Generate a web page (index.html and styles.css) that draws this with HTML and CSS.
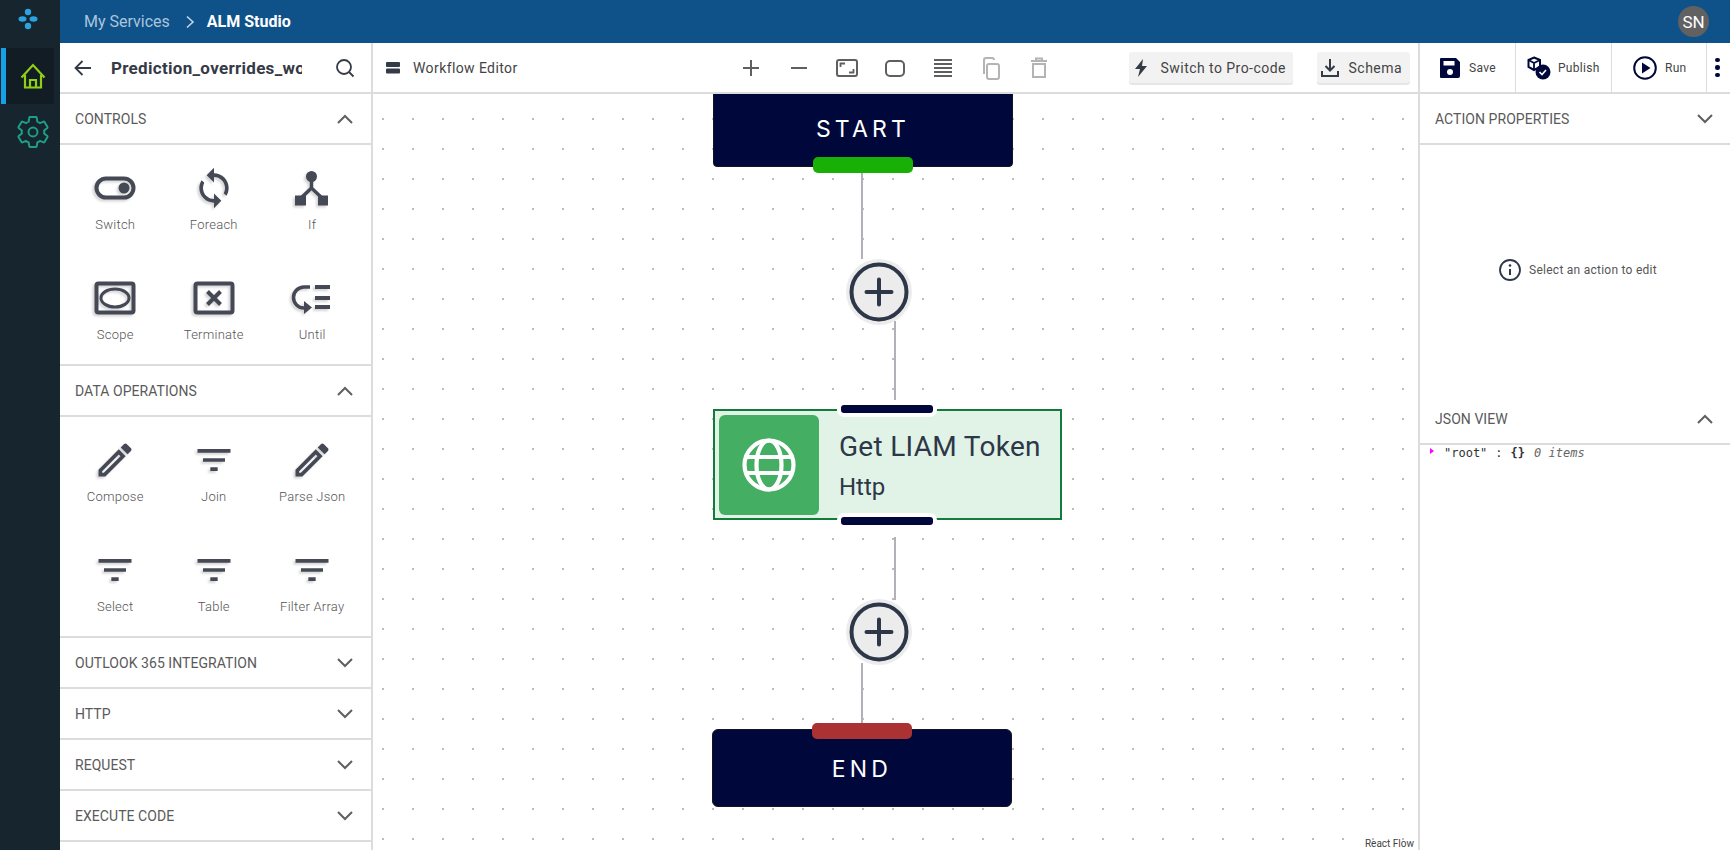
FILE: index.html
```html
<!DOCTYPE html>
<html lang="en">
<head>
  <meta charset="UTF-8">
  <title>ALM Studio</title>
  <link rel="stylesheet" href="styles.css">
</head>
<body>
  <div class="app">
    <nav class="rail">
      <svg class="rail-logo" width="30" height="30" viewBox="0 0 30 30"><circle cx="15" cy="8" r="3.2"/><circle cx="15" cy="22" r="3.2"/><ellipse cx="9.5" cy="15" rx="4" ry="2.8"/><ellipse cx="20.5" cy="15" rx="4" ry="2.8"/></svg>
      <a class="rail-item active">
        <svg width="28" height="28" viewBox="0 0 28 28" fill="none" stroke="#8fd014" stroke-width="2.2"><path d="M2.5 15.5 14 3l11.5 12.5"/><path d="M6 13v12.5h16V13"/><path d="M11 25.5V18h6v7.500"/></svg>
      </a>
      <a class="rail-item">
        <svg width="36" height="36" viewBox="0 0 24 24" fill="none" stroke="#1f9e8a" stroke-width="1.3"><path d="M19.43 12.98c.04-.32.07-.64.07-.98 0-.34-.03-.66-.07-.98l2.11-1.65c.19-.15.24-.42.12-.64l-2-3.46c-.09-.16-.26-.25-.44-.25-.06 0-.12.01-.17.03l-2.49 1c-.52-.4-1.08-.73-1.69-.98l-.38-2.65C14.46 2.18 14.25 2 14 2h-4c-.25 0-.46.18-.49.42l-.38 2.65c-.61.25-1.17.59-1.69.98l-2.49-1c-.06-.02-.12-.03-.18-.03-.17 0-.34.09-.43.25l-2 3.46c-.13.22-.07.49.12.64l2.11 1.65c-.04.32-.07.65-.07.98 0 .33.03.66.07.98l-2.11 1.65c-.19.15-.24.42-.12.64l2 3.46c.09.16.26.25.44.25.06 0 .12-.01.17-.03l2.49-1c.52.4 1.08.73 1.69.98l.38 2.65c.03.24.24.42.49.42h4c.25 0 .46-.18.49-.42l.38-2.65c.61-.25 1.17-.59 1.69-.98l2.49 1c.06.02.12.03.18.03.17 0 .34-.09.43-.25l2-3.46c.12-.22.07-.49-.12-.64l-2.11-1.65z"/><circle cx="12" cy="12" r="3"/></svg>
      </a>
    </nav>

    <div class="main">
      <header class="topbar">
        <span class="crumb">My Services</span>
        <svg class="crumb-sep" width="10" height="14" viewBox="0 0 10 14" fill="none" stroke="#c6d6e4" stroke-width="1.6"><path d="M2 1.500 8 7l-6 5.500"/></svg>
        <span class="crumb-current">ALM Studio</span>
        <span class="avatar">SN</span>
      </header>

      <div class="workspace">
        <aside class="tools">
          <div class="tools-head">
            <svg width="20" height="20" viewBox="0 0 20 20" fill="none" stroke="#353a47" stroke-width="1.800"><path d="M18 10H2.500M9.500 3l-7 7 7 7"/></svg>
            <span class="flow-name">Prediction_overrides_workflow</span>
            <svg width="20" height="20" viewBox="0 0 20 20" fill="none" stroke="#353a47" stroke-width="1.800"><circle cx="9" cy="9" r="7"/><path d="m14 14 4.500 4.500"/></svg>
          </div>

          <div class="section-head">
            <span>CONTROLS</span>
            <svg class="chev" width="16" height="10" viewBox="0 0 16 10"><path d="M1 9l7-7 7 7"/></svg>
          </div>
          <div class="palette">
            <div class="tool">
              <svg class="tool-icon" viewBox="0 0 44 44"><rect x="3.500" y="12.500" width="37" height="19" rx="9.500" fill="none" stroke="#454855" stroke-width="4"/><circle cx="31" cy="22" r="5.500"/></svg>
              <span>Switch</span>
            </div>
            <div class="tool">
              <svg class="tool-icon" viewBox="0 0 24 24"><path d="M12 4V1L8 5l4 4V6c3.310 0 6 2.690 6 6 0 1.010-.25 1.970-.7 2.800l1.460 1.460C19.540 15.030 20 13.570 20 12c0-4.420-3.580-8-8-8zm0 14c-3.310 0-6-2.690-6-6 0-1.010.25-1.970.7-2.800L5.240 7.740C4.460 8.970 4 10.430 4 12c0 4.420 3.580 8 8 8v3l4-4-4-4v3z"/></svg>
              <span>Foreach</span>
            </div>
            <div class="tool">
              <svg class="tool-icon" viewBox="0 0 44 44"><circle cx="21.500" cy="10.500" r="5.500"/><path d="M21.500 14v8L10 33M21.500 22 33 33" fill="none" stroke="#454855" stroke-width="3.500"/><rect x="5" y="29.500" width="11" height="10"/><rect x="28" y="29.500" width="10" height="10"/></svg>
              <span>If</span>
            </div>
            <div class="tool">
              <svg class="tool-icon" viewBox="0 0 44 44"><rect x="3.500" y="7.500" width="37" height="29" rx="2" fill="none" stroke="#454855" stroke-width="4"/><ellipse cx="22" cy="22" rx="14" ry="9" fill="none" stroke="#454855" stroke-width="3"/></svg>
              <span>Scope</span>
            </div>
            <div class="tool">
              <svg class="tool-icon" viewBox="0 0 44 44"><rect x="3.500" y="7.500" width="37" height="29" rx="2" fill="none" stroke="#454855" stroke-width="4"/><path d="m15.500 15.500 13 13m0-13-13 13" fill="none" stroke="#454855" stroke-width="4"/></svg>
              <span>Terminate</span>
            </div>
            <div class="tool">
              <svg class="tool-icon" viewBox="0 0 44 44"><path d="M20 11h-6a10.500 10.500 0 0 0 0 21h2" fill="none" stroke="#454855" stroke-width="3.500"/><path d="m14 25 8 6.500-8 6.500z"/><path d="M25 11h15M25 22h15M25 31h15" fill="none" stroke="#454855" stroke-width="4"/></svg>
              <span>Until</span>
            </div>
          </div>

          <div class="section-head">
            <span>DATA OPERATIONS</span>
            <svg class="chev" width="16" height="10" viewBox="0 0 16 10"><path d="M1 9l7-7 7 7"/></svg>
          </div>
          <div class="palette">
            <div class="tool">
              <svg class="tool-icon" viewBox="0 0 24 24"><path d="M14.060 9.020l.92.92L5.920 19H5v-.92l9.060-9.060M17.660 3c-.25 0-.51.1-.7.29l-1.830 1.830 3.750 3.750 1.830-1.830c.39-.39.39-1.020 0-1.410l-2.340-2.340c-.2-.2-.45-.29-.71-.29zm-3.600 3.190L3 17.250V21h3.750L17.810 9.940l-3.750-3.750z"/></svg>
              <span>Compose</span>
            </div>
            <div class="tool">
              <svg class="tool-icon" viewBox="0 0 24 24"><path d="M10 18h4v-2h-4v2zM3 6v2h18V6H3zm3 7h12v-2H6v2z"/></svg>
              <span>Join</span>
            </div>
            <div class="tool">
              <svg class="tool-icon" viewBox="0 0 24 24"><path d="M14.060 9.020l.92.92L5.920 19H5v-.92l9.060-9.060M17.660 3c-.25 0-.51.1-.7.29l-1.830 1.830 3.750 3.750 1.830-1.830c.39-.39.39-1.020 0-1.410l-2.340-2.340c-.2-.2-.45-.29-.71-.29zm-3.600 3.190L3 17.250V21h3.750L17.810 9.940l-3.750-3.750z"/></svg>
              <span>Parse Json</span>
            </div>
            <div class="tool">
              <svg class="tool-icon" viewBox="0 0 24 24"><path d="M10 18h4v-2h-4v2zM3 6v2h18V6H3zm3 7h12v-2H6v2z"/></svg>
              <span>Select</span>
            </div>
            <div class="tool">
              <svg class="tool-icon" viewBox="0 0 24 24"><path d="M10 18h4v-2h-4v2zM3 6v2h18V6H3zm3 7h12v-2H6v2z"/></svg>
              <span>Table</span>
            </div>
            <div class="tool">
              <svg class="tool-icon" viewBox="0 0 24 24"><path d="M10 18h4v-2h-4v2zM3 6v2h18V6H3zm3 7h12v-2H6v2z"/></svg>
              <span>Filter Array</span>
            </div>
          </div>

          <div class="section-head">
            <span>OUTLOOK 365 INTEGRATION</span>
            <svg class="chev" width="16" height="10" viewBox="0 0 16 10"><path d="M1 1l7 7 7-7"/></svg>
          </div>
          <div class="section-head">
            <span>HTTP</span>
            <svg class="chev" width="16" height="10" viewBox="0 0 16 10"><path d="M1 1l7 7 7-7"/></svg>
          </div>
          <div class="section-head">
            <span>REQUEST</span>
            <svg class="chev" width="16" height="10" viewBox="0 0 16 10"><path d="M1 1l7 7 7-7"/></svg>
          </div>
          <div class="section-head">
            <span>EXECUTE CODE</span>
            <svg class="chev" width="16" height="10" viewBox="0 0 16 10"><path d="M1 1l7 7 7-7"/></svg>
          </div>
        </aside>

        <section class="editor">
          <div class="editor-bar">
            <svg class="editor-mark" width="14" height="12" viewBox="0 0 14 12" fill="#353a47"><rect width="14" height="5" rx="1"/><rect y="6.500" width="14" height="5" rx="1"/></svg>
            <span class="editor-title">Workflow Editor</span>
            <div class="canvas-tools">
              <svg width="24" height="24" viewBox="0 0 24 24" stroke="#5f5f5f" stroke-width="2"><path d="M12 4v16M4 12h16"/></svg>
              <svg width="24" height="24" viewBox="0 0 24 24" stroke="#5f5f5f" stroke-width="2"><path d="M4 12h16"/></svg>
              <svg width="24" height="24" viewBox="0 0 24 24" fill="none" stroke="#5f5f5f" stroke-width="2"><rect x="2" y="4" width="20" height="16" rx="2"/><path d="M5.500 11V7.500H10M18.500 13v3.500H14" stroke-width="1.800"/></svg>
              <svg width="24" height="24" viewBox="0 0 24 24" fill="none" stroke="#5f5f5f" stroke-width="2"><rect x="3" y="5" width="18" height="15" rx="4"/></svg>
              <svg width="24" height="24" viewBox="0 0 24 24" stroke="#5f5f5f" stroke-width="2"><path d="M3 4h18M3 8h18M3 12h18M3 16h18M3 20h18"/></svg>
              <svg width="24" height="24" viewBox="0 0 24 24" fill="none" stroke="#b4b4b4" stroke-width="2"><rect x="8" y="8" width="12" height="15" rx="2"/><path d="M5 18V4a2 2 0 0 1 2-2h6a2 2 0 0 1 2 2"/></svg>
              <svg width="24" height="24" viewBox="0 0 24 24" fill="none" stroke="#b4b4b4" stroke-width="2"><path d="M6 8h12v13H6zM4 5h16M9 4.500V2.500h6v2"/></svg>
            </div>
            <button class="flat-btn pro">
              <svg width="14" height="20" viewBox="0 0 14 20" fill="#353a47"><path d="M9 1 1 11h5l-2 8 9-11H8z"/></svg>
              Switch to Pro-code
            </button>
            <button class="flat-btn schema">
              <svg width="20" height="20" viewBox="0 0 20 20" fill="none" stroke="#353a47" stroke-width="2"><path d="M10 1v11M5.500 8l4.500 4.500L14.500 8M2 13v5h16v-5"/></svg>
              Schema
            </button>
          </div>

          <div class="canvas">
            <svg class="edges" width="1046" height="756">
              <path d="M489 79v86M522 227v79M522 443v63M489 569v60"/>
            </svg>

            <div class="node terminal start">START<i class="handle green"></i></div>

            <div class="add-btn add-one"><svg width="62" height="62" viewBox="0 0 62 62" fill="none" stroke="#2d3748"><circle cx="31" cy="31" r="27.500" stroke-width="4"/><path d="M18.500 31h25M31 18.500v25" stroke-width="4" stroke-linecap="round"/></svg></div>

            <div class="node http">
              <i class="port port-top"></i>
              <div class="http-icon">
                <svg width="54" height="54" viewBox="0 0 54 54" fill="none" stroke="#fff" stroke-width="4.200"><circle cx="27" cy="27" r="24.500"/><ellipse cx="27" cy="27" rx="12.500" ry="24.500"/><path d="M4 19h46M4 35h46"/></svg>
              </div>
              <div class="http-text">
                <div class="http-name">Get LIAM Token</div>
                <div class="http-type">Http</div>
              </div>
              <i class="port port-bottom"></i>
            </div>

            <div class="add-btn add-two"><svg width="62" height="62" viewBox="0 0 62 62" fill="none" stroke="#2d3748"><circle cx="31" cy="31" r="27.500" stroke-width="4"/><path d="M18.500 31h25M31 18.500v25" stroke-width="4" stroke-linecap="round"/></svg></div>

            <div class="node terminal end">END<i class="handle red"></i></div>

            <span class="attribution">React Flow</span>
          </div>
        </section>

        <aside class="props">
          <div class="actions">
            <div class="action save">
              <svg width="22" height="22" viewBox="0 0 22 22" fill="#00083b"><path d="M2 1h15l4 4v14a2 2 0 0 1-2 2H2a1 1 0 0 1-1-1V2a1 1 0 0 1 1-1z"/><rect x="4.500" y="4" width="11" height="4.500" fill="#fff"/><circle cx="11" cy="15" r="3" fill="#fff"/></svg>
              <span>Save</span>
            </div>
            <div class="action publish">
              <svg width="24" height="24" viewBox="0 0 24 24"><path d="M7 1.500 13 4v7l-6 3-5.500-3V4z" fill="none" stroke="#00083b" stroke-width="2"/><path d="M1.500 4 7 7l6-3M7 7v7" fill="none" stroke="#00083b" stroke-width="1.800"/><circle cx="16" cy="16" r="7.500" fill="#00083b"/><path d="m12.500 16 2.500 2.500 4-4.500" fill="none" stroke="#fff" stroke-width="1.600"/></svg>
              <span>Publish</span>
            </div>
            <div class="action run">
              <svg width="24" height="24" viewBox="0 0 24 24"><circle cx="12" cy="12" r="10.800" fill="none" stroke="#00083b" stroke-width="2"/><path d="M9 6.500v11l8.500-5.500z" fill="#00083b"/></svg>
              <span>Run</span>
            </div>
            <div class="more"><i></i><i></i><i></i></div>
          </div>

          <div class="section-head props-head">
            <span>ACTION PROPERTIES</span>
            <svg class="chev" width="16" height="10" viewBox="0 0 16 10"><path d="M1 1l7 7 7-7"/></svg>
          </div>
          <div class="props-empty">
            <svg width="22" height="22" viewBox="0 0 22 22" fill="none" stroke="#2d3748" stroke-width="1.800"><circle cx="11" cy="11" r="10"/><path d="M11 10v6" stroke-width="2"/><circle cx="11" cy="6.500" r="1.300" fill="#2d3748" stroke="none"/></svg>
            <span>Select an action to edit</span>
          </div>

          <div class="section-head props-head">
            <span>JSON VIEW</span>
            <svg class="chev" width="16" height="10" viewBox="0 0 16 10"><path d="M1 9l7-7 7 7"/></svg>
          </div>
          <div class="json-view">
            <i class="json-caret"></i>
            <span class="json-key">"root"</span>
            <span class="json-colon">:</span>
            <b class="json-brace">{}</b>
            <em class="json-count">0 items</em>
          </div>
        </aside>
      </div>
    </div>
  </div>
</body>
</html>
```

FILE: styles.css
```css
* {
  box-sizing: border-box;
}

html, body {
  margin: 0;
  height: 100%;
  overflow: hidden;
}

body {
  font-family: "Roboto", "Liberation Sans", sans-serif;
  background-color: #fff;
  color: #444;
}

.app {
  display: flex;
  height: 850px;
}

/* left rail */
.rail {
  width: 60px;
  flex-shrink: 0;
  background-color: #17252e;
  display: flex;
  flex-direction: column;
}

.rail-logo {
  margin: 4px 0 14px 13px;
  fill: #2aa3e0;
}

.rail-item {
  height: 56px;
  margin-left: 1px;
  width: 53px;
  display: flex;
  align-items: center;
  justify-content: center;
  padding-left: 10px;
}

.rail-item.active {
  background-color: #121c25;
  border-left: 5px solid #16a0e8;
  padding-left: 5px;
}

.main {
  flex: 1;
  min-width: 0;
  display: flex;
  flex-direction: column;
}

/* top bar */
.topbar {
  height: 43px;
  flex-shrink: 0;
  background-color: #0f5289;
  display: flex;
  align-items: center;
  padding: 0 21px 0 24px;
  font-size: 16px;
}

.crumb {
  color: #a9c5dc;
}

.crumb-sep {
  margin: 0 12px 0 15px;
}

.crumb-current {
  color: #fff;
  font-weight: 700;
}

.avatar {
  margin-left: auto;
  width: 31px;
  height: 31px;
  border-radius: 50%;
  background-color: #616161;
  color: #fff;
  font-size: 17px;
  display: flex;
  align-items: center;
  justify-content: center;
}

.workspace {
  flex: 1;
  display: flex;
  min-height: 0;
}

/* tools panel */
.tools {
  width: 313px;
  flex-shrink: 0;
  border-right: 2px solid #dcdcdc;
  overflow: hidden;
}

.tools-head {
  height: 51px;
  display: flex;
  align-items: center;
  padding: 0 16px 0 13px;
  border-bottom: 2px solid #dcdcdc;
}

.flow-name {
  width: 191px;
  margin: 0 auto 0 18px;
  overflow: hidden;
  white-space: nowrap;
  font-size: 17px;
  font-weight: 700;
  letter-spacing: 0.3px;
  color: #353a47;
}

.section-head {
  height: 51px;
  display: flex;
  align-items: center;
  justify-content: space-between;
  padding: 0 18px 0 15px;
  border-bottom: 2px solid #dcdcdc;
  font-size: 14px;
  letter-spacing: 0.05px;
  color: #5a5a5a;
}

.chev {
  fill: none;
  stroke: #5f5f5f;
  stroke-width: 2;
}

.palette {
  height: 221px;
  padding-left: 6px;
  display: grid;
  grid-template-columns: repeat(3, 98.500px);
  grid-auto-rows: 110px;
  border-bottom: 2px solid #dcdcdc;
}

.tool {
  display: flex;
  flex-direction: column;
  align-items: center;
  padding-top: 21px;
  font-size: 13px;
  font-weight: 300;
  letter-spacing: 0.25px;
  color: #555;
}

.tool span {
  margin-top: 7px;
  line-height: 16px;
}

.tool-icon {
  width: 44px;
  height: 44px;
  fill: #454855;
  filter: drop-shadow(-2px 2px 1px rgba(0, 0, 0, 0.16));
}

/* editor */
.editor {
  flex: 1;
  min-width: 0;
  display: flex;
  flex-direction: column;
}

.editor-bar {
  height: 51px;
  flex-shrink: 0;
  display: flex;
  align-items: center;
  padding-left: 13px;
  border-bottom: 2px solid #dcdcdc;
  position: relative;
}

.editor-title {
  margin-left: 13px;
  font-size: 14px;
  letter-spacing: 0.4px;
  color: #444;
}

.canvas-tools {
  display: flex;
  gap: 24px;
  margin-left: 221px;
}

.flat-btn {
  height: 31px;
  border: none;
  border-radius: 3px;
  background-color: #f2f2f2;
  box-shadow: 0 2px 0 #e6e6e6;
  display: flex;
  align-items: center;
  font-family: inherit;
  font-size: 14px;
  letter-spacing: 0.45px;
  white-space: nowrap;
  color: #444;
}

.flat-btn.pro {
  width: 164px;
  margin-left: 78px;
  padding: 0 0 0 5px;
  gap: 13px;
}

.flat-btn.schema {
  width: 93px;
  margin-left: 24px;
  padding: 0 0 0 3px;
  gap: 9px;
}

.canvas {
  flex: 1;
  position: relative;
  overflow: hidden;
  background-color: #fff;
  background-image: radial-gradient(circle, #bdbdbd 0.9px, transparent 1.100px);
  background-size: 30px 30px;
  background-position: -5px 10px;
}

.edges {
  position: absolute;
  left: 0;
  top: 0;
}

.edges path {
  fill: none;
  stroke: #b1b1b7;
  stroke-width: 2;
}

.node {
  position: absolute;
}

.terminal {
  width: 300px;
  background-color: #00083b;
  border: 1px solid #14141e;
  color: #fff;
  font-family: "Inter", "Roboto", sans-serif;
  font-size: 23px;
  letter-spacing: 4.200px;
  display: flex;
  align-items: center;
  justify-content: center;
}

.start {
  left: 340px;
  top: -10px;
  height: 83px;
  padding-top: 7px;
  border-radius: 0 0 4px 4px;
}

.end {
  left: 339px;
  top: 635px;
  height: 78px;
  padding-top: 2px;
  border-radius: 6px;
}

.handle {
  position: absolute;
  left: 99px;
  width: 100px;
  height: 16px;
  border-radius: 5px;
}

.handle.green {
  bottom: -7px;
  background-color: #18b007;
}

.handle.red {
  top: -7px;
  background-color: #aa3232;
}

.add-btn {
  position: absolute;
  left: 473px;
  width: 66px;
  height: 66px;
  border-radius: 50%;
  background-color: #ececec;
  display: flex;
  align-items: center;
  justify-content: center;
}

.add-one {
  top: 165px;
}

.add-two {
  top: 505px;
}

.http {
  left: 340px;
  top: 315px;
  width: 349px;
  height: 111px;
  border: 2px solid #127a3a;
  background-color: #e1f2e7;
  padding: 4px;
  display: flex;
  align-items: center;
  color: #2d3748;
}

.port {
  position: absolute;
  left: 122px;
  width: 100px;
  height: 16px;
  background-color: #00083b;
  border: 4px solid #fff;
  border-radius: 7px;
}

.port-top {
  top: -10px;
}

.port-bottom {
  bottom: -11px;
}

.http-icon {
  width: 100px;
  height: 100px;
  flex-shrink: 0;
  background-color: #44ae63;
  border-radius: 6px;
  display: flex;
  align-items: center;
  justify-content: center;
}

.http-text {
  margin-left: 20px;
}

.http-name {
  font-size: 28px;
  letter-spacing: 0.3px;
  line-height: 36px;
  margin-top: 2px;
}

.http-type {
  font-size: 24px;
  line-height: 30px;
  margin-top: 7px;
}

.attribution {
  position: absolute;
  right: 4px;
  bottom: 1px;
  font-size: 10px;
  color: #444;
}

/* right panel */
.props {
  width: 312px;
  flex-shrink: 0;
  border-left: 2px solid #dcdcdc;
  display: flex;
  flex-direction: column;
}

.actions {
  height: 51px;
  flex-shrink: 0;
  display: flex;
  border-bottom: 2px solid #dcdcdc;
}

.action {
  display: flex;
  align-items: center;
  border-right: 1px solid #dcdcdc;
  font-size: 12px;
  letter-spacing: 0.3px;
  color: #444;
}

.action.save {
  width: 96px;
  padding-left: 19px;
  gap: 8px;
}

.action.publish {
  width: 96px;
  padding-left: 11px;
  gap: 7px;
}

.action.run {
  width: 95px;
  padding-left: 21px;
  gap: 8px;
}

.more {
  flex: 1;
  display: flex;
  flex-direction: column;
  align-items: center;
  justify-content: center;
  gap: 3px;
  padding-right: 2px;
}

.more i {
  width: 4.500px;
  height: 4.500px;
  border-radius: 50%;
  background-color: #00083b;
}

.props-head {
  padding-right: 17px;
}

.props-empty {
  height: 249px;
  flex-shrink: 0;
  display: flex;
  align-items: center;
  justify-content: center;
  gap: 8px;
  padding-left: 6px;
  font-size: 12px;
  letter-spacing: 0.25px;
  color: #555;
}

.json-view {
  display: flex;
  align-items: center;
  height: 16px;
  padding-left: 10px;
  font-family: "DejaVu Sans Mono", "Liberation Mono", monospace;
  font-size: 12px;
  color: #333;
  white-space: pre;
}

.json-caret {
  width: 0;
  height: 0;
  margin: -4px 10px 0 0;
  border-left: 4px solid #f0f;
  border-top: 3.500px solid transparent;
  border-bottom: 3.500px solid transparent;
}

.json-colon {
  margin: 0 8px;
}

.json-count {
  margin-left: 9px;
  color: #666;
}
```
